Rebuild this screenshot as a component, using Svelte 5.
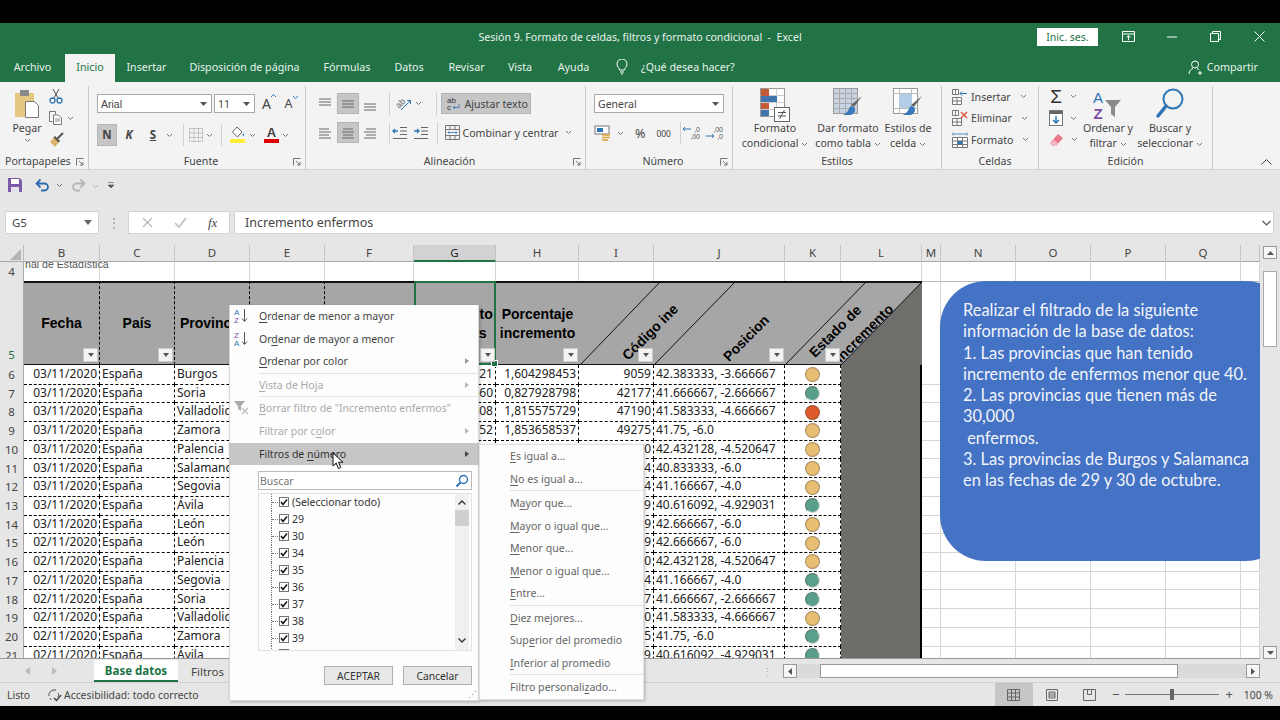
<script>
  const rows = [
    ["03/11/2020", "Burgos", "1221", "1,604298453", "9059", "42.383333, -3.666667", "a"],
    ["03/11/2020", "Soria", "860", "0,827928798", "42177", "41.666667, -2.666667", "g"],
    ["03/11/2020", "Valladolid", "5608", "1,815575729", "47190", "41.583333, -4.666667", "r"],
    ["03/11/2020", "Zamora", "1952", "1,853658537", "49275", "41.75, -6.0", "a"],
    ["03/11/2020", "Palencia", "", "", "34120", "42.432128, -4.520647", "a"],
    ["03/11/2020", "Salamanca", "", "", "37274", "40.833333, -6.0", "a"],
    ["03/11/2020", "Segovia", "", "", "40194", "41.166667, -4.0", "a"],
    ["03/11/2020", "Ávila", "", "", "5019", "40.616092, -4.929031", "g"],
    ["03/11/2020", "León", "", "", "24089", "42.666667, -6.0", "a"],
    ["02/11/2020", "León", "", "", "24089", "42.666667, -6.0", "a"],
    ["02/11/2020", "Palencia", "", "", "34120", "42.432128, -4.520647", "a"],
    ["02/11/2020", "Segovia", "", "", "40194", "41.166667, -4.0", "g"],
    ["02/11/2020", "Soria", "", "", "42177", "41.666667, -2.666667", "g"],
    ["02/11/2020", "Valladolid", "", "", "47190", "41.583333, -4.666667", "a"],
    ["02/11/2020", "Zamora", "", "", "49275", "41.75, -6.0", "g"],
    ["02/11/2020", "Ávila", "", "", "5019", "40.616092, -4.929031", "g"],
  ];
  const cols = ["B", "C", "D", "E", "F", "G", "H", "I", "J", "K", "L", "M", "N", "O", "P", "Q", ""];
  const tail = [0, 1, 2, 3, 4, 5];
  const checks = ["(Seleccionar todo)", "29", "30", "34", "35", "36", "37", "38", "39", "40"];
  const sub = [
    [["", "E", "s igual a..."], ["", "N", "o es igual a..."]],
    [["M", "a", "yor que..."], ["", "M", "ayor o igual que..."], ["", "M", "enor que..."], ["", "M", "enor o igual que..."], ["", "E", "ntre..."]],
    [["", "D", "iez mejores..."], ["Sup", "e", "rior del promedio"], ["", "I", "nferior al promedio"]],
    [["Filtro personali", "z", "ado..."]],
  ];
</script>

{#snippet chev()}
  <svg class="chev" width="7" height="5" viewBox="0 0 7 5"><path d="M1 1l2.5 2.5L6 1" fill="none" stroke="#777" stroke-width="1"/></svg>
{/snippet}

{#snippet launcher()}
  <svg class="launcher" width="8" height="8" viewBox="0 0 8 8"><path d="M.5 7.5v-7h7M3 3l4 4M7 4v3H4" fill="none" stroke="#777" stroke-width="1"/></svg>
{/snippet}

{#snippet lines(l)}
  <svg width="16" height="16" viewBox="0 0 16 16">
    {#each l as [a, b, y]}<line x1={a} x2={b} y1={y} y2={y} stroke="#666" stroke-width="1"/>{/each}
  </svg>
{/snippet}

{#snippet filter(cls)}
  <span class="fbtn {cls}"><i></i></span>
{/snippet}

<div class="app">
  <div class="black top"></div>

  <header class="titlebar">
    <div></div>
    <div class="title">Sesión 9. Formato de celdas, filtros y formato condicional &nbsp;-&nbsp; Excel</div>
    <div class="winbtns">
      <span class="signin">Inic. ses.</span>
      <svg class="w1" width="14" height="12" viewBox="0 0 14 12"><path d="M.5.5h12v10H.5zM.5 3h12M6.5 9V5M4.5 6.5l2-2 2 2" fill="none" stroke="#fff"/></svg>
      <svg class="w2" width="11" height="11" viewBox="0 0 11 11"><path d="M0 6h10" stroke="#fff"/></svg>
      <svg class="w3" width="11" height="11" viewBox="0 0 11 11"><path d="M.5 2.5h8v8h-8zM2.5 2.5v-2h8v8h-2" fill="none" stroke="#fff"/></svg>
      <svg class="w4" width="11" height="11" viewBox="0 0 11 11"><path d="M.5.5l10 10M10.5.5l-10 10" stroke="#fff"/></svg>
    </div>
  </header>

  <nav class="tabs">
    <span>Archivo</span>
    <span class="active">Inicio</span>
    <span>Insertar</span>
    <span>Disposición de página</span>
    <span>Fórmulas</span>
    <span>Datos</span>
    <span>Revisar</span>
    <span>Vista</span>
    <span>Ayuda</span>
    <div class="ask">
      <svg width="12" height="16" viewBox="0 0 12 16"><path d="M3.5 11c0-2-2.500-3-2.500-6a5 5 0 0 1 10 0c0 3-2.500 4-2.500 6zM4 13h4M5 15h2" fill="none" stroke="#fff"/></svg>
      <span>¿Qué desea hacer?</span>
    </div>
    <div class="share">
      <svg width="15" height="15" viewBox="0 0 15 15"><circle cx="7" cy="4.500" r="3.500" fill="none" stroke="#fff"/><path d="M1 14c0-3 2-5 4-5.500M9 8.500c1 .3 1.700.8 2.300 1.500M10 13h4M12 11v4" fill="none" stroke="#fff"/></svg>
      <span>Compartir</span>
    </div>
  </nav>

  <section class="ribbon">
    <div class="group g-clip">
      <div class="body">
        <div class="paste">
          <svg width="26" height="30" viewBox="0 0 26 30">
            <rect x="1" y="4" width="19" height="24" fill="#e6c880"/>
            <rect x="6" y="1" width="9" height="6" fill="#8a8a8a"/>
            <path d="M11.500 12.500h9l4 4v12h-13z" fill="#fff" stroke="#777"/>
          </svg>
          <span>Pegar</span>
          {@render chev()}
        </div>
        <div class="clip-small">
          <svg width="14" height="16" viewBox="0 0 14 16"><path d="M4 1l5 9M10 1L5 10" stroke="#555" fill="none"/><circle cx="3.500" cy="12.500" r="2.500" fill="none" stroke="#2e75b6" stroke-width="1.300"/><circle cx="10.500" cy="12.500" r="2.500" fill="none" stroke="#2e75b6" stroke-width="1.300"/></svg>
          <div class="copy">
            <svg width="13" height="14" viewBox="0 0 13 14"><path d="M.5.5h6v3M.5.5v10h3M4.500 4h5l3 3v6.500h-8z" fill="#fff" stroke="#777"/><path d="M6 8h5M6 10h5" stroke="#888"/></svg>
            {@render chev()}
          </div>
          <svg width="15" height="16" viewBox="0 0 15 16"><path d="M14 1l-6 6" stroke="#555" stroke-width="2"/><path d="M6 4l5 5-5 6-5-5z" fill="#dcb56c"/><path d="M6 4l5 5-1.500 1.500-5-5z" fill="#555"/></svg>
        </div>
      </div>
      <div class="glabel left">Portapapeles</div>
      {@render launcher()}
    </div>

    <div class="group g-font">
      <div class="body col">
        <div class="frow">
          <div class="box fname">Arial<svg width="7" height="4" viewBox="0 0 7 4"><path d="M0 0h7L3.500 4z" fill="#555"/></svg></div>
          <div class="box fsize">11<svg width="7" height="4" viewBox="0 0 7 4"><path d="M0 0h7L3.500 4z" fill="#555"/></svg></div>
          <span class="grow big">A<svg width="5" height="4" viewBox="0 0 5 4"><path d="M0 3l2.500-2.500L5 3" fill="none" stroke="#2e75b6"/></svg></span>
          <span class="grow">A<svg width="5" height="4" viewBox="0 0 5 4"><path d="M0 1l2.500 2.500L5 1" fill="none" stroke="#2e75b6"/></svg></span>
        </div>
        <div class="frow second">
          <span class="fmt sel">N</span>
          <span class="fmt it">K</span>
          <span class="fmt ul">S</span>
          {@render chev()}
          <i class="vsep s1"></i>
          <svg class="bd" width="14" height="14" viewBox="0 0 14 14"><path d="M.5.5h13v13H.5zM.5 5h13M.5 9.500h13M5 .5v13M9.500.5v13" fill="none" stroke="#999" stroke-dasharray="1 1"/></svg>
          {@render chev()}
          <i class="vsep s2"></i>
          <svg class="fill" width="16" height="18" viewBox="0 0 16 18"><path d="M7 1l5 5-4.500 5L2.500 6z" fill="#fff" stroke="#666"/><path d="M13 7c1 1.500 1.500 2.500.8 3-.8.500-1.300-.5-.8-3z" fill="#2e75b6"/><rect y="13" width="15" height="4" fill="#ffee33"/></svg>
          {@render chev()}
          <svg class="fc" width="15" height="18" viewBox="0 0 15 18"><rect y="13" width="15" height="4" fill="#d00"/><text x="7.500" y="11" text-anchor="middle" font-size="13" font-weight="700" fill="#444" font-family="Liberation Sans">A</text></svg>
          {@render chev()}
        </div>
      </div>
      <div class="glabel">Fuente</div>
      {@render launcher()}
    </div>

    <div class="group g-align">
      <div class="body col">
        <div class="arow">
          <span class="al">{@render lines([[2, 14, 3], [2, 14, 6], [2, 14, 9]])}</span>
          <span class="al sel">{@render lines([[2, 14, 5], [2, 14, 8], [2, 14, 11]])}</span>
          <span class="al">{@render lines([[2, 14, 8], [2, 14, 11], [2, 14, 14]])}</span>
          <span class="rot">
            <svg width="16" height="15" viewBox="0 0 16 15"><text x="0" y="10" font-size="9" fill="#666" font-family="Liberation Sans" transform="rotate(-45 5 8)">ab</text><path d="M5 14l9-9M11 4.500h3.500V8" stroke="#2e75b6" fill="none"/></svg>
            {@render chev()}
          </span>
          <span class="wrap">
            <svg width="14" height="15" viewBox="0 0 14 15"><text x="0" y="7" font-size="8" fill="#333" font-family="Liberation Sans">ab</text><text x="0" y="14" font-size="8" fill="#333" font-family="Liberation Sans">c</text><path d="M6 11.500h6V8M6 11.500l2-1.500M6 11.500L8 13" fill="none" stroke="#2e75b6" stroke-width=".8"/></svg>
            Ajustar texto
          </span>
        </div>
        <div class="arow second">
          <span class="al">{@render lines([[2, 12, 4], [2, 14, 7], [2, 12, 10], [2, 14, 13]])}</span>
          <span class="al sel">{@render lines([[3, 13, 4], [2, 14, 7], [3, 13, 10], [2, 14, 13]])}</span>
          <span class="al">{@render lines([[4, 14, 4], [2, 14, 7], [4, 14, 10], [2, 14, 13]])}</span>
          <span class="ind first">
            <svg width="16" height="14" viewBox="0 0 16 14"><path d="M8 1.500h7M8 5h7M8 8.500h7M1 12.500h14" stroke="#666"/><path d="M6 5H1M3 3L1 5l2 2" stroke="#2e75b6" fill="none" stroke-width="1.300"/></svg>
          </span>
          <span class="ind">
            <svg width="16" height="14" viewBox="0 0 16 14"><path d="M8 1.500h7M8 5h7M8 8.500h7M1 12.500h14" stroke="#666"/><path d="M1 5h5M4 3l2 2-2 2" stroke="#2e75b6" fill="none" stroke-width="1.300"/></svg>
          </span>
          <span class="merge">
            <svg width="15" height="15" viewBox="0 0 15 15"><path d="M.5.5h14v14H.5zM.5 4.500h14M.5 10.500h14M5 .5v4M10 .5v4M5 10.500v4M10 10.500v4" fill="none" stroke="#777"/><path d="M3 7.500h9M3 7.500l1.500-1.500M3 7.500L4.500 9M12 7.500L10.500 6M12 7.500L10.500 9" fill="none" stroke="#2e75b6" stroke-width=".8"/></svg>
            <span>Combinar y centrar</span>
            {@render chev()}
          </span>
        </div>
      </div>
      <div class="glabel">Alineación</div>
      {@render launcher()}
    </div>

    <div class="group g-num">
      <div class="body col">
        <div class="box general">General<svg width="7" height="4" viewBox="0 0 7 4"><path d="M0 0h7L3.500 4z" fill="#555"/></svg></div>
        <div class="nrow">
          <svg width="18" height="16" viewBox="0 0 18 16"><rect x="1" y="1" width="14" height="8" fill="#fff" stroke="#777"/><rect x="3" y="3" width="6" height="4" fill="#2e75b6"/><path d="M8 10h8M8 12.500h8M8 15h6" stroke="#dba53b" stroke-width="1.500"/></svg>
          {@render chev()}
          <span class="pct">%</span>
          <span class="thou">000</span>
          <i class="vsep"></i>
          <svg width="18" height="14" viewBox="0 0 18 14"><text x="18" y="6" text-anchor="end" font-size="7" fill="#555" font-family="Liberation Sans">,0</text><text x="18" y="13" text-anchor="end" font-size="7" fill="#555" font-family="Liberation Sans">,00</text><path d="M1 3h8M1 3l2-2M1 3l2 2" stroke="#2e75b6" fill="none"/></svg>
          <svg class="dec2" width="18" height="14" viewBox="0 0 18 14"><text x="18" y="6" text-anchor="end" font-size="7" fill="#555" font-family="Liberation Sans">,00</text><text x="18" y="13" text-anchor="end" font-size="7" fill="#555" font-family="Liberation Sans">,0</text><path d="M1 10h8M9 10l-2-2M9 10l-2 2" stroke="#2e75b6" fill="none"/></svg>
        </div>
      </div>
      <div class="glabel">Número</div>
      {@render launcher()}
    </div>

    <div class="group g-styles">
      <div class="body">
        <div class="bigbtn s-a">
          <svg width="30" height="34" viewBox="0 0 30 34">
            <rect x=".5" y=".5" width="24" height="28" fill="#fff" stroke="#999"/>
            <path d="M.5 7.500h24M.5 14.500h24M.5 21.500h24M8.500.5v28M16.500.5v28" stroke="#ccc"/>
            <rect x="1" y="1" width="8" height="13" fill="#c55a3a"/>
            <rect x="1" y="8" width="16" height="6" fill="#3f74ad"/>
            <rect x="1" y="15" width="8" height="6" fill="#c55a3a"/>
            <rect x="1" y="22" width="8" height="6" fill="#3f74ad"/>
            <rect x="14.500" y="19.500" width="15" height="14" fill="#fff" stroke="#666"/>
            <path d="M18 24.500h8M18 28h8M24.500 22l-5 9" stroke="#555" fill="none"/>
          </svg>
          <div class="btxt">Formato<br/>condicional {@render chev()}</div>
        </div>
        <div class="bigbtn s-b">
          <svg width="30" height="34" viewBox="0 0 30 34">
            <rect x=".5" y=".5" width="24" height="25" fill="#c8d4e4" stroke="#999"/>
            <path d="M.5 5.500h24M.5 10.500h24M.5 15.500h24M.5 20.500h24M6.500.5v25M12.500.5v25M18.500.5v25" stroke="#aaa"/>
            <path d="M29 8l-8 11-3-2z" fill="#666"/>
            <path d="M18 18c-3 2-1 5-8 9h8c4-2 5-5 3-8z" fill="#3a78bd"/>
          </svg>
          <div class="btxt">Dar formato<br/>como tabla {@render chev()}</div>
        </div>
        <div class="bigbtn s-c">
          <svg width="30" height="34" viewBox="0 0 30 34">
            <rect x=".5" y=".5" width="24" height="25" fill="#fff" stroke="#999"/>
            <path d="M.5 5.500h24M.5 20.500h24M6.500.5v25M18.500.5v25" stroke="#bbb"/>
            <rect x="6" y="6" width="13" height="14" fill="#b4cde6"/>
            <path d="M29 8l-8 11-3-2z" fill="#666"/>
            <path d="M18 18c-3 2-1 5-8 9h8c4-2 5-5 3-8z" fill="#3a78bd"/>
          </svg>
          <div class="btxt">Estilos de<br/>celda {@render chev()}</div>
        </div>
      </div>
      <div class="glabel">Estilos</div>
    </div>

    <div class="group g-cells">
      <div class="body col">
        <div class="crow">
          <svg width="16" height="16" viewBox="0 0 16 16"><path d="M.5 8.500h9v7h-9zM5 8.500v7M.5 12h9M.5.5h6v5h-6zM3.500.5v5" fill="#fff" stroke="#777"/><path d="M15 4.500H8M8 4.500l2-2M8 4.500l2 2" stroke="#2e75b6" fill="none"/></svg>
          <span>Insertar</span>{@render chev()}
        </div>
        <div class="crow">
          <svg width="16" height="16" viewBox="0 0 16 16"><path d="M.5 8.500h9v7h-9zM5 8.500v7M.5 12h9M.5.5h6v5h-6zM3.500.5v5" fill="#fff" stroke="#777"/><path d="M9 2l6 6M15 2L9 8" stroke="#d9573a" stroke-width="1.400"/></svg>
          <span>Eliminar</span>{@render chev()}
        </div>
        <div class="crow">
          <svg width="16" height="16" viewBox="0 0 16 16"><path d="M1 .5v3M15 .5v3M1 2h14" stroke="#2e75b6" fill="none" stroke-width=".8"/><path d="M.5 5.500h15v10H.5zM.5 9h15M.5 12.500h15M5.500 5.500v10M10.500 5.500v10" fill="#fff" stroke="#777"/><rect x="6" y="9" width="4" height="3.500" fill="#2e75b6"/></svg>
          <span>Formato</span>{@render chev()}
        </div>
      </div>
      <div class="glabel">Celdas</div>
    </div>

    <div class="group g-edit">
      <div class="body">
        <div class="edit-small">
          <div class="erow"><span class="sigma">Σ</span>{@render chev()}</div>
          <div class="erow">
            <svg width="14" height="16" viewBox="0 0 14 16"><rect x=".5" y=".5" width="13" height="15" fill="#fff" stroke="#777"/><rect x="1" y="1" width="12" height="3" fill="#666"/><path d="M7 6v7M4 10l3 3 3-3" stroke="#2e75b6" stroke-width="1.500" fill="none"/></svg>
            {@render chev()}
          </div>
          <div class="erow">
            <svg width="15" height="14" viewBox="0 0 15 14"><path d="M9 1l5 4-7 8H4L1 10z" fill="#e8788a"/><path d="M1 10l3 3h3l2-2.500-4-3.500z" fill="#f4b8c2"/></svg>
            {@render chev()}
          </div>
        </div>
        <div class="bigbtn e-a">
          <svg width="30" height="34" viewBox="0 0 30 34">
            <text x="5" y="15" font-size="15" fill="#2e75b6" font-family="Liberation Sans" text-anchor="middle">A</text>
            <text x="5" y="31" font-size="15" font-weight="700" fill="#7a4fa3" font-family="Liberation Sans" text-anchor="middle">Z</text>
            <path d="M12 12h16l-6 7v10l-4-3v-7z" fill="#8a8a8a"/>
          </svg>
          <div class="btxt">Ordenar y<br/>filtrar {@render chev()}</div>
        </div>
        <div class="bigbtn e-b">
          <svg width="30" height="34" viewBox="0 0 30 34">
            <circle cx="18" cy="11" r="9.500" fill="none" stroke="#2e75b6" stroke-width="2"/>
            <path d="M11 18L3 28" stroke="#2e75b6" stroke-width="3.500" stroke-linecap="round"/>
          </svg>
          <div class="btxt">Buscar y<br/>seleccionar {@render chev()}</div>
        </div>
      </div>
      <div class="glabel">Edición</div>
    </div>
    <svg class="collapse" width="11" height="6" viewBox="0 0 11 6"><path d="M.5 5.500l5-5 5 5" fill="none" stroke="#444"/></svg>
  </section>

  <div class="qat">
    <svg width="16" height="16" viewBox="0 0 16 16"><path d="M1 1h11.500L15 3.500V15H1z" fill="#7b5ba6"/><rect x="4" y="2" width="8" height="5" fill="#fff"/><rect x="4" y="10" width="8" height="5" fill="#e8e4ef"/></svg>
    <svg class="q-undo" width="15" height="14" viewBox="0 0 15 14"><path d="M2 5.500h7.500a3.500 3.500 0 0 1 0 7H6M5.500 1.500L1.500 5.500l4 4" fill="none" stroke="#2e6db0" stroke-width="1.800"/></svg>
    {@render chev()}
    <svg class="q-redo" width="15" height="14" viewBox="0 0 15 14"><path d="M13 5.500H5.500a3.500 3.500 0 0 0 0 7H9M9.500 1.500l4 4-4 4" fill="none" stroke="#b5b5b5" stroke-width="1.800"/></svg>
    <span class="faint">{@render chev()}</span>
    <svg class="q-more" width="8" height="8" viewBox="0 0 8 8"><path d="M1 1.500h6M1 4h6L4 7z" fill="#555" stroke="#555" stroke-width=".6"/></svg>
  </div>

  <div class="formula">
    <div class="namebox"><span>G5</span><svg width="8" height="5" viewBox="0 0 8 5"><path d="M0 0h8L4 5z" fill="#666"/></svg></div>
    <span class="fdots">⋮</span>
    <div class="fxbox">
      <svg width="11" height="11" viewBox="0 0 11 11"><path d="M1 1l9 9M10 1l-9 9" stroke="#bdbdbd" stroke-width="1.400"/></svg>
      <svg width="13" height="11" viewBox="0 0 13 11"><path d="M1 6l4 4 7-9" fill="none" stroke="#bdbdbd" stroke-width="1.600"/></svg>
      <span class="fx">fx</span>
    </div>
    <div class="finput"><span>Incremento enfermos</span><svg width="9" height="6" viewBox="0 0 9 6"><path d="M.5 1l4 4 4-4" fill="none" stroke="#555" stroke-width="1.200"/></svg></div>
  </div>

  <div class="sheetwrap">
    <div class="sheet">
      <div class="row head">
        <div class="corner"><svg width="11" height="11" viewBox="0 0 12 12"><path d="M12 0v12H0z" fill="#b4b4b4"/></svg></div>
        {#each cols as c}<div class="ch" class:csel={c === "G"}>{c}</div>{/each}
      </div>

      <div class="row r4">
        <div class="rh">4</div>
        <div class="g4 src">nal de Estadística</div>
        {#each Array(16) as _}<div class="g4"></div>{/each}
      </div>

      <div class="row r5">
        <div class="rh rh5">5</div>
        <div class="hc dash">Fecha{@render filter("")}</div>
        <div class="hc dash">País{@render filter("")}</div>
        <div class="hc dash leftish">Provincia{@render filter("")}</div>
        <div class="hc dash">{@render filter("")}</div>
        <div class="hc"></div>
        <div class="hc two rightish">Incremento<br/>enfermos{@render filter("")}</div>
        <div class="hc two">Porcentaje<br/>incremento{@render filter("")}</div>
        <div class="hc">{@render filter("")}</div>
        <div class="hc">{@render filter("")}</div>
        <div class="hc">{@render filter("")}</div>
        <div class="hc"></div>
        {#each tail as _}<div class="g5"></div>{/each}
      </div>

      {#each rows as r, i}
        <div class="row data">
          <div class="rh">{i + 6}</div>
          <div class="c rt">{r[0]}</div>
          <div class="c">España</div>
          <div class="c">{r[1]}</div>
          <div class="c"></div>
          <div class="c"></div>
          <div class="c rt">{r[2]}</div>
          <div class="c rt">{r[3]}</div>
          <div class="c rt">{r[4]}</div>
          <div class="c">{r[5]}</div>
          <div class="c dotcell"><span class="dot {r[6]}"></span></div>
          <div class="dark"></div>
          {#each tail as _}<div class="g"></div>{/each}
        </div>
      {/each}

      <svg class="slants" width="343" height="84" viewBox="0 0 343 84">
        <path d="M262 84L343 1v83z" fill="#6f6e6b"/>
        <path d="M1 84L81 1M75 84L156 1M206 84L287 1M262 84L343 1" stroke="#111" fill="none"/>
      </svg>
      <span class="slab l1">Código ine</span>
      <span class="slab l2">Posicion</span>
      <span class="slab l3">Estado de</span>
      <span class="slab l4">incremento</span>

      <div class="selbox"><i></i></div>

      <div class="shape">
        Realizar el filtrado de la siguiente<br/>
        información de la base de datos:<br/>
        1. Las provincias que han tenido<br/>
        incremento de enfermos menor que 40.<br/>
        2. Las provincias que tienen más de<br/>
        30,000<br/>
        &nbsp;enfermos.<br/>
        3. Las provincias de Burgos y Salamanca<br/>
        en las fechas de 29 y 30 de octubre.
      </div>
    </div>
    <div class="vscroll">
      <span class="sbtn"><svg width="7" height="4" viewBox="0 0 7 4"><path d="M3.500 0L7 4H0z" fill="#555"/></svg></span>
      <span class="sthumb"></span>
      <span class="sbtn end"><svg width="7" height="4" viewBox="0 0 7 4"><path d="M0 0h7L3.500 4z" fill="#555"/></svg></span>
    </div>
  </div>

  <div class="sheettabs">
    <svg class="t-l" width="5" height="8" viewBox="0 0 5 8"><path d="M5 0v8L0 4z" fill="#bbb"/></svg>
    <svg class="t-r" width="5" height="8" viewBox="0 0 5 8"><path d="M0 0v8l5-4z" fill="#bbb"/></svg>
    <span class="stab">Base datos</span>
    <span class="stab2">Filtros</span>
    <span class="tdots">⋮</span>
    <span class="hbtn"><svg width="4" height="7" viewBox="0 0 4 7"><path d="M4 0v7L0 3.500z" fill="#555"/></svg></span>
    <div class="htrack"><span class="hthumb"></span></div>
    <span class="hbtn"><svg width="4" height="7" viewBox="0 0 4 7"><path d="M0 0v7l4-3.500z" fill="#555"/></svg></span>
  </div>

  <footer class="status">
    <span class="listo">Listo</span>
    <svg class="acc" width="15" height="14" viewBox="0 0 15 14"><path d="M2 8a5 5 0 0 1 5-6h2M11 5c1 2 .5 3-.5 4M3 10l1 2" fill="none" stroke="#555"/><path d="M7 10l2.500 2.500L14 7" fill="none" stroke="#444" stroke-width="1.500"/></svg>
    <span>Accesibilidad: todo correcto</span>
    <div class="views">
      <span class="view vsel"><svg width="13" height="12" viewBox="0 0 13 12"><path d="M.5.5h12v11H.5zM.5 4h12M.5 8h12M4.500.5v11M8.500.5v11" fill="none" stroke="#666"/></svg></span>
      <span class="view"><svg width="12" height="12" viewBox="0 0 12 12"><path d="M.5.5h11v11H.5zM3 3h6v6H3zM3 5h6M3 7h6" fill="none" stroke="#666"/></svg></span>
      <span class="view"><svg width="13" height="12" viewBox="0 0 13 12"><path d="M.5.5h12v11H.5zM4.500.5v5h4v-5" fill="none" stroke="#666"/></svg></span>
      <div class="zoomer">
        <span class="zm">−</span>
        <div class="slider"><i></i></div>
        <span class="zm">+</span>
      </div>
      <span class="pc">100 %</span>
    </div>
  </footer>

  <div class="black bottom"></div>

  <!-- filter menu sits over the grid -->
  <div class="menu">
    <div class="mi"><svg class="mic" width="15" height="15" viewBox="0 0 15 15"><text x="0" y="7" font-size="8" fill="#2e75b6" font-family="Liberation Sans">A</text><text x="0" y="14.500" font-size="8" fill="#7a4fa3" font-family="Liberation Sans">Z</text><path d="M10.500 1v12M8 10.500l2.500 3 2.500-3" fill="none" stroke="#555"/></svg><span><u>O</u>rdenar de menor a mayor</span></div>
    <div class="mi"><svg class="mic" width="15" height="15" viewBox="0 0 15 15"><text x="0" y="7" font-size="8" fill="#7a4fa3" font-family="Liberation Sans">Z</text><text x="0" y="14.500" font-size="8" fill="#2e75b6" font-family="Liberation Sans">A</text><path d="M10.500 1v12M8 10.500l2.500 3 2.500-3" fill="none" stroke="#555"/></svg><span>Or<u>d</u>enar de mayor a menor</span></div>
    <div class="mi"><span><u>O</u>rdenar por color</span><b class="arr"></b></div>
    <div class="msep"></div>
    <div class="mi off"><span><u>V</u>ista de Hoja</span><b class="arr"></b></div>
    <div class="msep"></div>
    <div class="mi off"><svg class="mic" width="15" height="15" viewBox="0 0 15 15"><path d="M0 1h11L7 6v5L4 9V6z" fill="#aaa"/><path d="M8 8l6 6M14 8l-6 6" stroke="#bbb" stroke-width="1.300"/></svg><span><u>B</u>orrar filtro de "Incremento enfermos"</span></div>
    <div class="mi off"><span>Filtrar por c<u>o</u>lor</span><b class="arr"></b></div>
    <div class="mi hover"><span>Filtros de <u>n</u>úmero</span><b class="arr dk"></b></div>
    <div class="search"><span>Buscar</span><svg width="14" height="14" viewBox="0 0 14 14"><circle cx="8.500" cy="5.500" r="4" fill="#fff" stroke="#2e75b6" stroke-width="1.400"/><path d="M5.500 8.500L1.500 12.500" stroke="#2e75b6" stroke-width="2"/></svg></div>
    <div class="tree">
      <div class="treelist">
        {#each checks as c}
          <div class="ck"><i class="conn"></i><svg width="10" height="10" viewBox="0 0 10 10"><rect x=".5" y=".5" width="9" height="9" fill="#fff" stroke="#777"/><path d="M2 5l2 2.500L8 2.500" fill="none" stroke="#111" stroke-width="1.500"/></svg><span>{c}</span></div>
        {/each}
      </div>
      <div class="treescroll">
        <svg width="8" height="5" viewBox="0 0 8 5"><path d="M.5 4.500L4 1l3.500 3.500" fill="none" stroke="#333" stroke-width="1.300"/></svg>
        <i></i>
        <svg class="tdown" width="8" height="5" viewBox="0 0 8 5"><path d="M.5.5L4 4 7.500.5" fill="none" stroke="#333" stroke-width="1.300"/></svg>
      </div>
    </div>
    <div class="mbtns"><span class="mb">ACEPTAR</span><span class="mb">Cancelar</span></div>
    <span class="grip">⋰</span>
  </div>

  <div class="submenu">
    {#each sub as group, i}
      {#if i > 0}<div class="msep"></div>{/if}
      {#each group as [a, b, c]}
        <div class="si">{a}<u>{b}</u>{c}</div>
      {/each}
    {/each}
  </div>

  <svg class="cursor" width="13" height="18" viewBox="0 0 13 18"><path d="M1 1v13l3.200-3 2.200 5.500 2.300-1-2.200-5.300H11z" fill="#fff" stroke="#111"/></svg>
</div>

<style>
  :global(body) { margin: 0; background: #000; }
  .app {
    position: relative;
    width: 1280px;
    height: 720px;
    overflow: hidden;
    display: flex;
    flex-direction: column;
    font-family: "Noto Sans", sans-serif;
    font-size: 11px;
    color: #444;
    background: #e6e6e6;
  }
  .black { background: #000; flex: none; }
  .top { height: 23px; }
  .bottom { height: 14px; }
  svg { display: block; flex: none; }
  u { text-underline-offset: 2px; }

  .titlebar {
    height: 31px;
    flex: none;
    box-sizing: border-box;
    padding-bottom: 4px;
    background: #217346;
    color: #e8f1ec;
    display: grid;
    grid-template-columns: 1fr auto 1fr;
    align-items: center;
    font-size: 10.6px;
  }
  .winbtns { display: flex; align-items: center; justify-content: flex-end; padding-right: 15px; }
  .signin { width: 61px; height: 18px; line-height: 18px; background: #fff; color: #217346; text-align: center; margin-right: 24px; }
  .w1 { margin-right: 31px; }
  .w2 { margin-right: 32px; }
  .w3 { margin-right: 33px; }

  .tabs {
    height: 28px;
    flex: none;
    box-sizing: border-box;
    background: #217346;
    color: #e8f1ec;
    display: grid;
    grid-template-columns: 65px 50px 63px 133px 72px 52px 63px 44px 63px auto 1fr;
    align-items: stretch;
    font-size: 10.7px;
  }
  .tabs > span { display: flex; align-items: center; justify-content: center; padding-bottom: 2px; }
  .tabs .active { background: #f3f3f3; color: #217346; }
  .ask { display: flex; align-items: center; gap: 13px; padding: 0 0 2px 11px; }
  .share { display: flex; align-items: center; justify-content: flex-end; gap: 4px; padding: 0 22px 2px 0; }

  .ribbon {
    position: relative;
    height: 88px;
    flex: none;
    background: #f3f3f3;
    display: flex;
    border-bottom: 1px solid #d2d2d2;
    box-sizing: border-box;
    font-size: 10.6px;
    color: #444;
  }
  .group {
    position: relative;
    height: 83px;
    margin-top: 4px;
    box-sizing: border-box;
    border-right: 1px solid #c8c8c8;
    display: flex;
    flex-direction: column;
    flex: none;
  }
  .body { flex: 1; display: flex; min-height: 0; }
  .col { flex-direction: column; }
  .glabel { height: 15px; line-height: 14px; text-align: center; flex: none; }
  .glabel.left { text-align: left; padding-left: 5px; }
  .launcher { position: absolute; right: 4px; bottom: 3px; }
  .vsep { width: 1px; height: 22px; background: #d0d0d0; flex: none; }
  .chev { flex: none; display: inline-block; vertical-align: middle; }
  .sel { background: #c6c6c6; outline: 1px solid #b5b5b5; outline-offset: -1px; }

  .g-clip { width: 89px; }
  .paste { width: 40px; margin-left: 7px; display: flex; flex-direction: column; align-items: center; padding-top: 3px; gap: 3px; line-height: 13px; }
  .clip-small { margin-left: 2px; padding-top: 2px; display: flex; flex-direction: column; gap: 7px; }
  .copy { display: flex; align-items: center; gap: 5px; }

  .g-font { width: 217px; padding: 8px 0 0 8px; }
  .frow { display: flex; align-items: center; }
  .frow.second { margin-top: 11px; height: 22px; }
  .box { box-sizing: border-box; height: 19px; background: #fff; border: 1px solid #a9a9a9; display: flex; align-items: center; justify-content: space-between; padding: 0 4px 0 3px; font-size: 10.500px; }
  .fname { width: 115px; font-family: "Liberation Sans", sans-serif; }
  .fsize { width: 41px; margin-left: 2px; }
  .grow { display: flex; align-items: flex-start; font-size: 12.500px; width: 22px; justify-content: center; }
  .grow.big { font-size: 14px; margin-left: 3px; }
  .fmt { width: 20px; height: 22px; line-height: 22px; text-align: center; font-size: 11.500px; font-weight: 700; box-sizing: border-box; flex: none; }
  .fmt.it { margin-left: 2px; font-style: italic; }
  .fmt.ul { margin-left: 4px; text-decoration: underline; }
  .frow.second .chev { margin-left: 3px; }
  .frow.second .s1 { margin: 0 5px 0 10px; }
  .frow.second .s2 { margin: 0 8px; }
  .bd { margin-right: 0; }
  .fc { margin: 0 0 0 8px; }

  .g-align { width: 280px; padding: 7px 0 0 8px; }
  .arow { display: flex; align-items: center; height: 21px; }
  .arow.second { margin-top: 8px; }
  .al { width: 22.500px; height: 21px; display: flex; align-items: center; justify-content: center; flex: none; }
  .rot { width: 48px; box-sizing: border-box; margin-left: 7px; padding-left: 6px; display: flex; align-items: center; gap: 3px; height: 22px; border-left: 1px solid #d0d0d0; border-right: 1px solid #d0d0d0; flex: none; }
  .wrap { margin-left: 4px; width: 90px; height: 21px; box-sizing: border-box; display: flex; align-items: center; gap: 4px; padding-left: 5px; background: #c6c6c6; border: 1px solid #b5b5b5; white-space: nowrap; flex: none; }
  .ind { width: 22px; display: flex; justify-content: center; flex: none; }
  .ind.first { width: 21px; margin-left: 7px; border-left: 1px solid #d0d0d0; padding: 3px 0; box-sizing: border-box; }
  .merge { margin-left: 5px; padding-left: 7px; display: flex; align-items: center; gap: 3px; height: 22px; border-left: 1px solid #d0d0d0; white-space: nowrap; }
  .merge .chev { margin-left: 4px; }

  .g-num { width: 147px; padding: 8px 0 0 8px; }
  .general { width: 130px; }
  .nrow { display: flex; align-items: center; gap: 5px; margin-top: 9px; height: 22px; }
  .pct { margin-left: 6px; font-size: 12.500px; }
  .thou { margin-left: 6px; font-size: 8.500px; }
  .nrow .vsep { margin: 0 -4px 0 4px; }

  .g-styles { width: 209px; }
  .bigbtn { display: flex; flex-direction: column; align-items: center; padding-top: 2px; flex: none; box-sizing: border-box; }
  .btxt { text-align: center; line-height: 15px; margin-top: -1px; white-space: nowrap; }
  .s-a { width: 84px; }
  .s-b { width: 62px; }
  .s-c { width: 58px; }

  .g-cells { width: 97px; padding: 0 0 0 10px; }
  .crow { display: flex; align-items: center; gap: 3px; height: 21.500px; flex: none; }
  .crow .chev { margin-left: 6px; }

  .g-edit { width: 174px; }
  .edit-small { width: 38px; box-sizing: border-box; padding: 0 0 0 10px; display: flex; flex-direction: column; flex: none; }
  .erow { display: flex; align-items: center; gap: 7px; height: 21.500px; }
  .sigma { font-size: 19px; line-height: 19px; color: #333; width: 14px; text-align: center; font-family: "Liberation Sans", sans-serif; }
  .e-a { width: 62px; }
  .e-b { width: 62px; }
  .collapse { position: absolute; right: 8px; bottom: 4px; }

  .qat { height: 30px; flex: none; display: flex; align-items: center; padding-left: 7px; background: #e6e6e6; }
  .q-undo { margin-left: 12px; }
  .qat .chev { margin-left: 6px; }
  .q-redo { margin-left: 8px; }
  .faint { opacity: .5; }
  .q-more { margin-left: 8px; }

  .formula { height: 45px; flex: none; display: flex; align-items: flex-start; padding-top: 11px; box-sizing: border-box; background: #e6e6e6; }
  .namebox { margin-left: 5px; width: 94px; height: 23px; box-sizing: border-box; background: #fff; border: 1px solid #d4d4d4; display: flex; align-items: center; justify-content: space-between; padding: 0 6px; font-size: 11.500px; }
  .fdots { width: 29px; text-align: center; line-height: 23px; color: #999; font-size: 12px; }
  .fxbox { width: 102px; height: 23px; box-sizing: border-box; background: #fff; border: 1px solid #d4d4d4; display: flex; align-items: center; gap: 21px; padding-left: 13px; }
  .fx { font-family: "Liberation Serif", serif; font-style: italic; font-size: 13px; }
  .finput { margin-left: 4px; width: 1040px; height: 23px; box-sizing: border-box; background: #fff; border: 1px solid #d4d4d4; display: flex; align-items: center; justify-content: space-between; padding: 0 2px 0 10px; font-size: 12.500px; }

  .sheetwrap { height: 415px; flex: none; display: flex; }
  .sheet { position: relative; width: 1260px; height: 413px; overflow: hidden; background: #fff; border-bottom: 1px solid #999; box-sizing: content-box; }
  .row { display: grid; grid-template-columns: 24px 76px 75px 75px 75px 89px 82px 83px 75px 131px 56px 81px 19px 75px 75px 75px 75px 19px; }
  .head { height: 17px; background: #e6e6e6; border-bottom: 1px solid #a8a8a8; box-sizing: border-box; }
  .corner { display: flex; align-items: flex-end; justify-content: flex-end; padding: 0 2px 2px 0; border-right: 1px solid #bbb; }
  .ch { text-align: center; font-size: 11.500px; line-height: 16px; color: #444; border-right: 1px solid #c4c4c4; box-sizing: border-box; }
  .csel { background: #d2d2d2; border-bottom: 2px solid #217346; height: 17px; color: #222; }
  .rh { background: #e6e6e6; text-align: center; font-size: 11.500px; line-height: 19.500px; color: #444; border-right: 1px solid #a8a8a8; box-sizing: border-box; }

  .r4 { height: 19px; overflow: hidden; }
  .g4 { border-right: 1px solid #d6d6d6; box-sizing: border-box; white-space: nowrap; }
  .src { font-family: "Liberation Sans", sans-serif; font-size: 10.600px; line-height: 10px; margin-top: -3px; color: #555; overflow: visible; padding-left: 1px; }

  .r5 { height: 84px; }
  .rh5 { color: #217346; display: flex; align-items: flex-end; justify-content: center; padding-bottom: 2px; line-height: 16px; }
  .hc {
    position: relative;
    background: #a6a6a6;
    border-top: 2px solid #111;
    border-bottom: 1px solid #111;
    box-sizing: border-box;
    font: 700 14px/19px "Liberation Sans", sans-serif;
    color: #000;
    display: flex;
    align-items: center;
    justify-content: center;
    text-align: center;
    white-space: nowrap;
  }
  .dash { border-right: 1px dashed #000; }
  .leftish { justify-content: flex-start; padding-left: 5px; overflow: hidden; }
  .g5 { border-right: 1px solid #d6d6d6; border-top: 1px solid #bbb; box-sizing: border-box; }
  .fbtn { position: absolute; right: 1px; bottom: 2px; width: 15px; height: 14px; background: #f4f4f4; border: 1px solid #c8c8c8; box-sizing: border-box; display: flex; align-items: center; justify-content: center; z-index: 3; }
  .fbtn i { width: 0; height: 0; border-left: 3.500px solid transparent; border-right: 3.500px solid transparent; border-top: 4px solid #555; }

  .data { height: 18.730px; }
  .c { border-right: 1px dashed #000; border-bottom: 1px dashed #000; box-sizing: border-box; padding: 0 2px; font-size: 12px; line-height: 18.500px; color: #222; white-space: nowrap; overflow: hidden; }
  .rt { text-align: right; }
  .dotcell { display: flex; align-items: center; justify-content: center; padding: 1px 0 0; }
  .dot { width: 15px; height: 15px; border-radius: 50%; box-sizing: border-box; border: 1px solid rgba(80, 80, 60, .45); }
  .dot.a { background: #e8bd74; }
  .dot.g { background: #5a9f8c; }
  .dot.r { background: #dc5a2c; }
  .dark { background: #6e6d69; border-right: 2px solid #000; box-sizing: border-box; }
  .g { border-right: 1px solid #d6d6d6; border-bottom: 1px solid #d6d6d6; box-sizing: border-box; }

  .slants { position: absolute; left: 579px; top: 36px; }
  .slab { position: absolute; font: 700 14px/16px "Liberation Sans", sans-serif; color: #000; white-space: nowrap; transform: translate(-50%, -50%) rotate(-45deg); z-index: 2; }
  .l1 { left: 650px; top: 87px; }
  .l2 { left: 746px; top: 93px; }
  .l3 { left: 835px; top: 86px; }
  .l4 { left: 864px; top: 88px; }
  .selbox { position: absolute; left: 414px; top: 36px; width: 82px; height: 84px; box-sizing: border-box; border: 2px solid #217346; z-index: 2; }
  .selbox i { position: absolute; right: -4px; bottom: -4px; width: 5px; height: 5px; background: #217346; border: 1px solid #fff; }

  .shape {
    position: absolute;
    left: 940px;
    top: 36px;
    width: 352px;
    height: 280px;
    box-sizing: border-box;
    border-radius: 46px;
    background: #4472c4;
    color: #f2f5fb;
    padding: 18px 0 0 23px;
    font-family: Lato, sans-serif;
    font-size: 16.400px;
    line-height: 21.300px;
    z-index: 2;
    white-space: nowrap;
  }

  .vscroll { width: 20px; background: #e6e6e6; padding: 1px 3px; box-sizing: border-box; display: flex; flex-direction: column; height: 415px; }
  .sbtn { height: 13px; flex: none; background: #f6f6f6; border: 1px solid #999; box-sizing: border-box; display: flex; align-items: center; justify-content: center; }
  .sthumb { margin-top: 12px; height: 76px; background: #fff; border: 1px solid #aaa; box-sizing: border-box; }
  .sbtn.end { margin-top: auto; }

  .sheettabs { height: 23px; flex: none; background: #e6e6e6; display: flex; align-items: center; border-bottom: 1px solid #d0d0d0; box-sizing: border-box; }
  .t-l { margin-left: 25px; }
  .t-r { margin-left: 22px; }
  .stab { margin-left: 37px; width: 84px; height: 22px; line-height: 21px; box-sizing: border-box; background: #fff; border-bottom: 2px solid #217346; text-align: center; color: #217346; font-weight: 700; font-size: 11.500px; align-self: flex-start; flex: none; }
  .stab2 { margin-left: 13px; font-size: 11.500px; width: 480px; flex: none; }
  .tdots { width: 102px; text-align: right; color: #aaa; flex: none; }
  .hbtn { width: 14px; height: 14px; box-sizing: border-box; background: #f6f6f6; border: 1px solid #999; display: flex; align-items: center; justify-content: center; margin-left: 10px; flex: none; }
  .htrack { width: 449px; height: 14px; background: #dadada; display: flex; padding-left: 23px; box-sizing: border-box; flex: none; }
  .hthumb { width: 358px; height: 14px; background: #fff; border: 1px solid #999; box-sizing: border-box; }
  .htrack + .hbtn { margin-left: 0; }

  .status { height: 23px; flex: none; background: #e6e6e6; display: flex; align-items: center; font-size: 10.400px; color: #444; box-sizing: border-box; padding-right: 7px; }
  .listo { margin-left: 7px; width: 40px; }
  .acc { margin-right: 2px; }
  .views { margin-left: auto; display: flex; align-items: center; height: 100%; }
  .view { width: 38px; height: 100%; display: flex; align-items: center; justify-content: center; }
  .vsel { background: #c6c6c6; }
  .zoomer { display: flex; align-items: center; gap: 6px; margin-left: 3px; }
  .zm { font-size: 13px; color: #555; line-height: 13px; }
  .slider { position: relative; width: 94px; height: 1px; background: #777; }
  .slider i { position: absolute; left: 45px; top: -5px; width: 4px; height: 11px; background: #666; }
  .pc { margin-left: 11px; }

  .menu {
    position: absolute;
    left: 229px;
    top: 305px;
    width: 250px;
    height: 396px;
    box-sizing: border-box;
    background: #fdfdfd;
    border: 1px solid #d9d9d9;
    border-top: none;
    box-shadow: 1px 1px 3px rgba(0, 0, 0, .25);
    z-index: 5;
    display: flex;
    flex-direction: column;
    font-size: 10.500px;
    color: #444;
  }
  .mi { position: relative; height: 22.500px; line-height: 22.500px; padding-left: 30px; flex: none; white-space: nowrap; margin-left: -1px; margin-right: -1px; }
  .mi.off { color: #aaa; }
  .mi.hover { background: #c6c6c6; margin-top: .5px; color: #333; }
  .mic { position: absolute; left: 5px; top: 3px; }
  .arr { position: absolute; right: 10px; top: 8px; width: 0; height: 0; border-left: 4px solid #999; border-top: 3.500px solid transparent; border-bottom: 3.500px solid transparent; }
  .arr.dk { border-left-color: #444; }
  .off .arr { border-left-color: #bbb; }
  .msep { height: 1px; background: #e3e3e3; margin-left: 29px; flex: none; }
  .search { margin: 6px 6px 0 28px; height: 19px; box-sizing: border-box; border: 1px solid #bbb; background: #fff; display: flex; align-items: center; justify-content: space-between; padding: 0 2px 0 1px; color: #777; flex: none; }
  .tree { margin: 3px 6px 0 28px; height: 158px; border: 1px solid #e2e2e2; display: flex; justify-content: space-between; box-sizing: border-box; flex: none; overflow: hidden; }
  .treelist { padding: 0 0 0 12px; flex: 1; position: relative; }
  .ck { position: relative; height: 16.900px; display: flex; align-items: center; gap: 3px; padding-left: 8px; white-space: nowrap; color: #333; }
  .ck .conn { position: absolute; left: 0; top: 0; height: 100%; width: 7px; box-sizing: border-box; border-left: 1px dotted #777; }
  .ck .conn::after { content: ""; position: absolute; left: 0; right: 0; top: 50%; border-top: 1px dotted #777; }
  .treescroll { width: 14px; margin: 0 2px 0 0; display: flex; flex-direction: column; align-items: center; padding-top: 6px; background: #f0f0f0; }
  .treescroll i { width: 14px; height: 16px; background: #cfcfcf; margin-top: 5px; }
  .tdown { margin-top: auto; margin-bottom: 7px; }
  .mbtns { display: flex; justify-content: flex-end; gap: 10px; padding-right: 6px; margin-top: 15px; flex: none; }
  .mb { width: 69px; height: 19px; line-height: 18px; box-sizing: border-box; border: 1px solid #b0b0b0; background: #e8e8e8; text-align: center; font-size: 10.300px; color: #333; }
  .grip { position: absolute; right: 1px; bottom: 0; color: #888; font-size: 9px; line-height: 10px; }

  .submenu {
    position: absolute;
    left: 479px;
    top: 444px;
    width: 165px;
    height: 256px;
    box-sizing: border-box;
    background: #fdfdfd;
    border: 1px solid #e2e2e2;
    box-shadow: 1px 1px 3px rgba(0, 0, 0, .25);
    z-index: 6;
    font-size: 10.600px;
    color: #666;
  }
  .si { height: 22.500px; line-height: 22.500px; padding-left: 30px; white-space: nowrap; }
  .submenu .msep { margin: 0 0 1px 30px; }
  .cursor { position: absolute; left: 332px; top: 452px; z-index: 7; }
</style>
